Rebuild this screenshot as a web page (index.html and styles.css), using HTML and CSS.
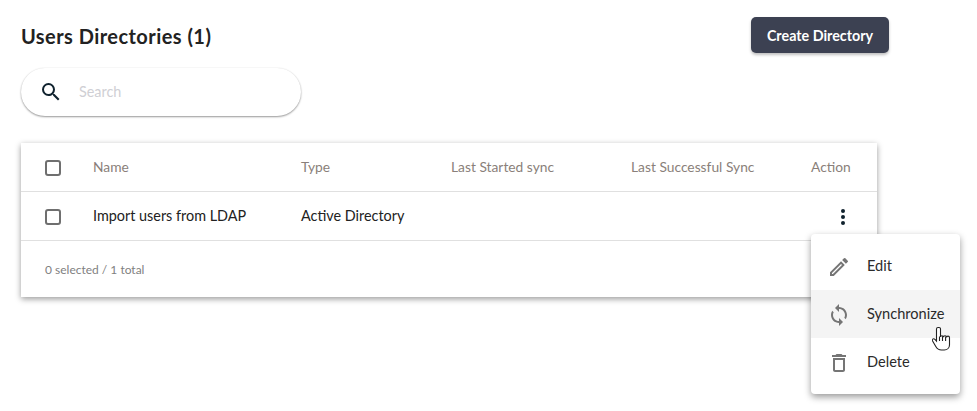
FILE: index.html
```html
<!DOCTYPE html>
<html lang="en">
<head>
<meta charset="utf-8">
<title>Users Directories</title>
<link rel="stylesheet" href="styles.css">
</head>
<body>
<main class="page">
  <header class="top">
    <h1 class="title">Users Directories (1)</h1>
    <button class="create">Create Directory</button>
  </header>
  <div class="search">
    <svg class="search-icon" viewBox="0 0 24 24"><path d="M15.5 14h-.79l-.28-.27A6.47 6.47 0 0 0 16 9.5 6.5 6.5 0 1 0 9.5 16c1.61 0 3.09-.59 4.23-1.57l.27.28v.79l5 4.99L20.49 19l-4.99-5zm-6 0C7.01 14 5 11.99 5 9.5S7.01 5 9.5 5 14 7.01 14 9.5 11.99 14 9.5 14z"/></svg>
    <span class="placeholder">Search</span>
  </div>
  <section class="table">
    <div class="row head">
      <span class="check"></span>
      <span class="htext">Name</span><span class="htext">Type</span><span class="htext">Last Started sync</span><span class="htext">Last Successful Sync</span><span class="htext">Action</span>
    </div>
    <div class="row body">
      <span class="check"></span>
      <span class="cell">Import users from LDAP</span><span class="cell">Active Directory</span><span></span><span></span>
      <span class="action"><i></i><i></i><i></i></span>
    </div>
    <div class="foot">0 selected / 1 total</div>
  </section>
</main>
<nav class="menu">
  <div class="item">
    <svg viewBox="0 0 24 24"><path d="M3 17.25V21h3.75L17.81 9.94l-3.75-3.75L3 17.25zM5.92 19H5v-.92l9.06-9.06.92.92L5.92 19zM20.71 7.04a1 1 0 0 0 0-1.41l-2.34-2.34a1 1 0 0 0-1.41 0l-1.83 1.83 3.75 3.75 1.83-1.83z"/></svg>
    <span class="label">Edit</span>
  </div>
  <div class="item active">
    <svg viewBox="0 0 24 24"><path d="M12 4V1L8 5l4 4V6c3.31 0 6 2.69 6 6 0 1.01-.25 1.97-.7 2.8l1.46 1.46A7.93 7.93 0 0 0 20 12c0-4.42-3.58-8-8-8zm0 14c-3.31 0-6-2.69-6-6 0-1.01.25-1.97.7-2.8L5.24 7.74A7.93 7.93 0 0 0 4 12c0 4.42 3.58 8 8 8v3l4-4-4-4v3z"/></svg>
    <span class="label">Synchronize</span>
  </div>
  <div class="item">
    <svg viewBox="0 0 24 24"><path d="M6 19c0 1.1.9 2 2 2h8c1.1 0 2-.9 2-2V7H6v12zM8 9h8v10H8V9zm7.5-5-1-1h-5l-1 1H5v2h14V4h-3.5z"/></svg>
    <span class="label">Delete</span>
  </div>
</nav>
<svg class="cursor" viewBox="0 0 20 26"><path d="M6 1.5c-.9 0-1.5.7-1.5 1.6V15l-1.6-1.7c-.7-.7-1.8-.7-2.3 0-.4.5-.3 1.2 0 1.8l3.2 5.4c1.2 2 2.8 3.5 5.5 3.5h3c3 0 5.2-2.3 5.2-5.3v-7c0-.9-.7-1.6-1.5-1.6s-1.4.6-1.4 1.4c0-.9-.7-1.7-1.6-1.7s-1.5.6-1.5 1.5c0-.9-.7-1.6-1.6-1.6-.7 0-1.4.5-1.4 1.2V3.1c0-.9-.6-1.6-1.5-1.6zM7.5 10.5V15M10.5 10.5V15M13.6 10.8V15" fill="#fff" stroke="#222" stroke-width="1.1"/></svg>
</body>
</html>
```
FILE: styles.css
```css
* { box-sizing: border-box; }
html, body { margin: 0; height: 100%; }
body {
  position: relative;
  width: 977px;
  height: 411px;
  overflow: hidden;
  background: #fff;
  font-family: "Lato", "Open Sans", sans-serif;
  color: #222;
}
.page { padding: 17px 88px 0 21px; }
.top {
  display: flex;
  justify-content: space-between;
  align-items: center;
  height: 36px;
}
.title { margin: 2px 0 0; font-size: 20px; font-weight: 700; letter-spacing: .45px; color: #222; }
.create {
  width: 138px;
  height: 36px;
  border: 0;
  border-radius: 5px;
  background: #3c4152;
  color: #fff;
  font: 700 14.3px "Lato", sans-serif;
  box-shadow: 0 2px 3px rgba(0, 0, 0, .25);
}
.search {
  display: flex;
  align-items: center;
  width: 280px;
  height: 48px;
  margin-top: 15px;
  padding-left: 18px;
  border-radius: 24px;
  background: #fff;
  box-shadow: 0 1px 2px rgba(0, 0, 0, .4), 0 0 2px rgba(0, 0, 0, .06);
}
.search-icon { width: 24px; height: 24px; fill: #10222e; }
.placeholder { margin: -2px 0 0 16px; font-size: 14.4px; color: #cfcfd4; }
.table {
  width: 856px;
  height: 154px;
  margin-top: 27px;
  background: #fff;
  box-shadow: 0 2px 6px rgba(0, 0, 0, .4);
  font-size: 14.4px;
}
.row {
  display: grid;
  grid-template-columns: 48px 208px 150px 180px 180px 1fr;
  align-items: center;
  height: 49px;
  padding-left: 24px;
  border-bottom: 1px solid #e0e0e0;
}
.head { color: #8a7f7a; font-size: 13.8px; }
.htext { margin-top: -2px; }
.cell { margin-top: -2px; }
.check {
  display: block;
  width: 16px;
  height: 16px;
  margin-top: 2px;
  border: 2px solid #6f6f6f;
  border-radius: 3px;
}
.action { display: flex; flex-direction: column; align-items: center; gap: 2px; width: 64px; margin-top: 2px; }
.action i { width: 4px; height: 4px; border-radius: 50%; background: #10222e; }
.foot { padding: 21px 24px; font-size: 12px; color: #7f7f7f; }
.menu {
  position: absolute;
  left: 811px;
  top: 234px;
  width: 149px;
  height: 160px;
  padding: 8px 0;
  border-radius: 4px;
  background: #fff;
  box-shadow: 0 3px 7px rgba(0, 0, 0, .4);
  font-size: 14.6px;
}
.item { display: flex; align-items: center; height: 48px; padding-left: 16px; gap: 16px; color: #2b2b2b; }
.item svg { width: 24px; height: 24px; margin-top: 2px; fill: #757575; flex: none; }
.label { margin-top: -2px; }
.item.active { background: #f4f4f4; }
.cursor { position: absolute; left: 932px; top: 326px; width: 20px; height: 26px; }
```
